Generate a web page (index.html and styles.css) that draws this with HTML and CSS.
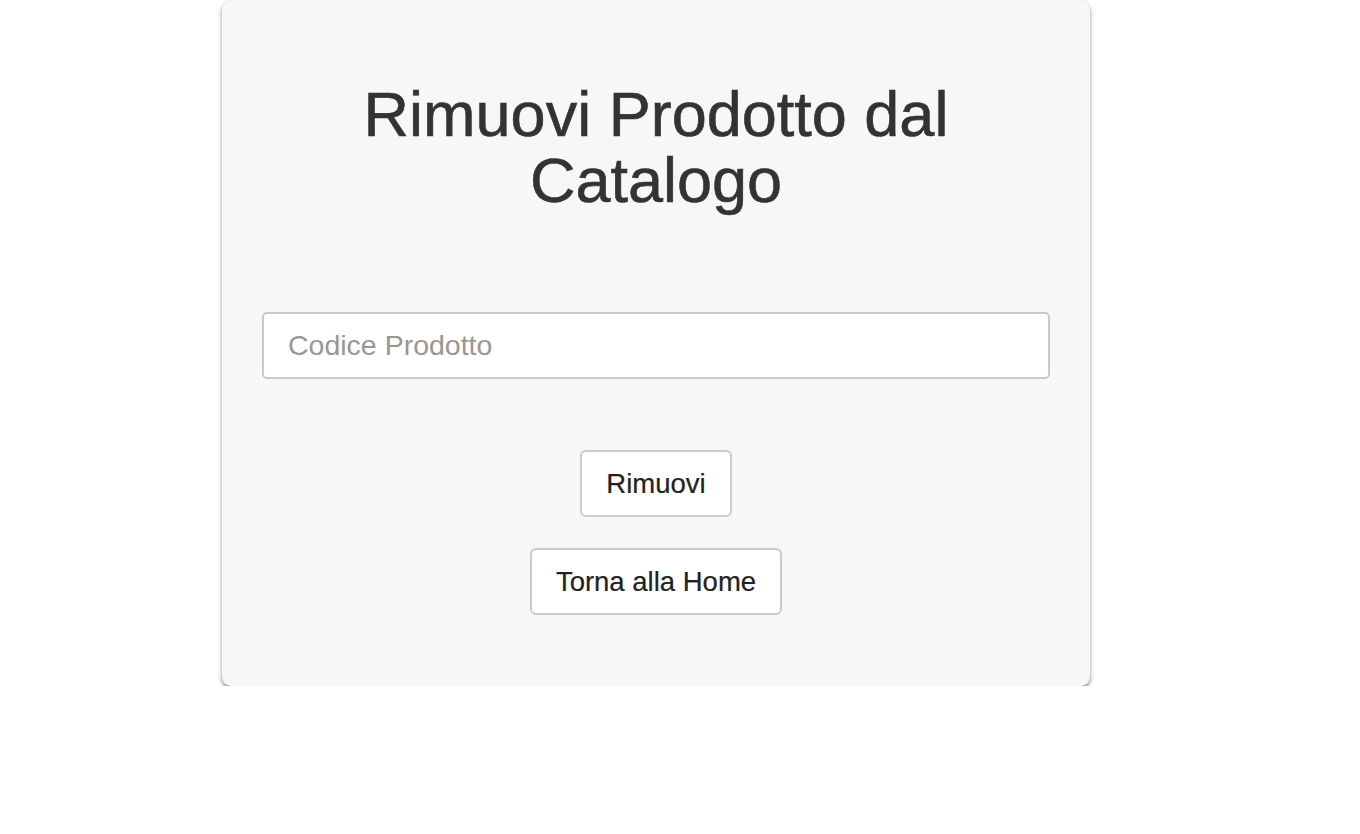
FILE: index.html
```html
<!DOCTYPE html>
<html lang="it">
<head>
<meta charset="utf-8">
<title>Rimuovi Prodotto dal Catalogo</title>
<link rel="stylesheet" href="styles.css">
</head>
<body>
<div class="page">
  <div class="card">
    <h1 class="title">Rimuovi Prodotto dal Catalogo</h1>
    <form class="form">
      <input class="field" type="text" placeholder="Codice Prodotto">
      <div class="actions">
        <button class="btn" type="button">Rimuovi</button>
        <button class="btn" type="button">Torna alla Home</button>
      </div>
    </form>
  </div>
</div>
</body>
</html>
```
FILE: styles.css
```css
html, body {
  margin: 0;
  padding: 0;
  background: #ffffff;
}
body {
  font-family: "Liberation Sans", Arial, Helvetica, sans-serif;
  color: #333333;
}
.page {
  padding-left: 222px;
}
.card {
  width: 868px;
  box-sizing: border-box;
  height: 686px;
  background: #f7f7f7;
  border-radius: 9px;
  padding: 40px 40px 0;
  box-shadow: 0 3px 4px rgba(0, 0, 0, 0.42), 0 0 1px rgba(0, 0, 0, 0.18);
}
.title {
  margin: 41px 50px 0;
  font-size: 63px;
  line-height: 66px;
  font-weight: normal;
  text-align: center;
  color: #333333;
  -webkit-text-stroke: 0.6px #333333;
}
.form {
  display: flex;
  flex-direction: column;
  margin-top: 99px;
}
.field {
  box-sizing: border-box;
  width: 100%;
  height: 67px;
  border: 2px solid #c9c9c9;
  border-radius: 5px;
  background: #ffffff;
  padding: 0 24px;
  font-family: "Liberation Sans", Arial, Helvetica, sans-serif;
  font-size: 28.5px;
  color: #333333;
  outline: none;
}
.field::placeholder {
  color: #9a9693;
}
.actions {
  display: flex;
  flex-direction: column;
  align-items: center;
  gap: 31px;
  margin-top: 71px;
}
.btn {
  box-sizing: border-box;
  height: 67px;
  padding: 0 24px;
  border: 2px solid #cbcbcb;
  border-radius: 6px;
  background: #ffffff;
  font-family: "Liberation Sans", Arial, Helvetica, sans-serif;
  font-size: 27.5px;
  color: #222222;
  cursor: pointer;
  -webkit-text-stroke: 0.2px #222222;
}
```
